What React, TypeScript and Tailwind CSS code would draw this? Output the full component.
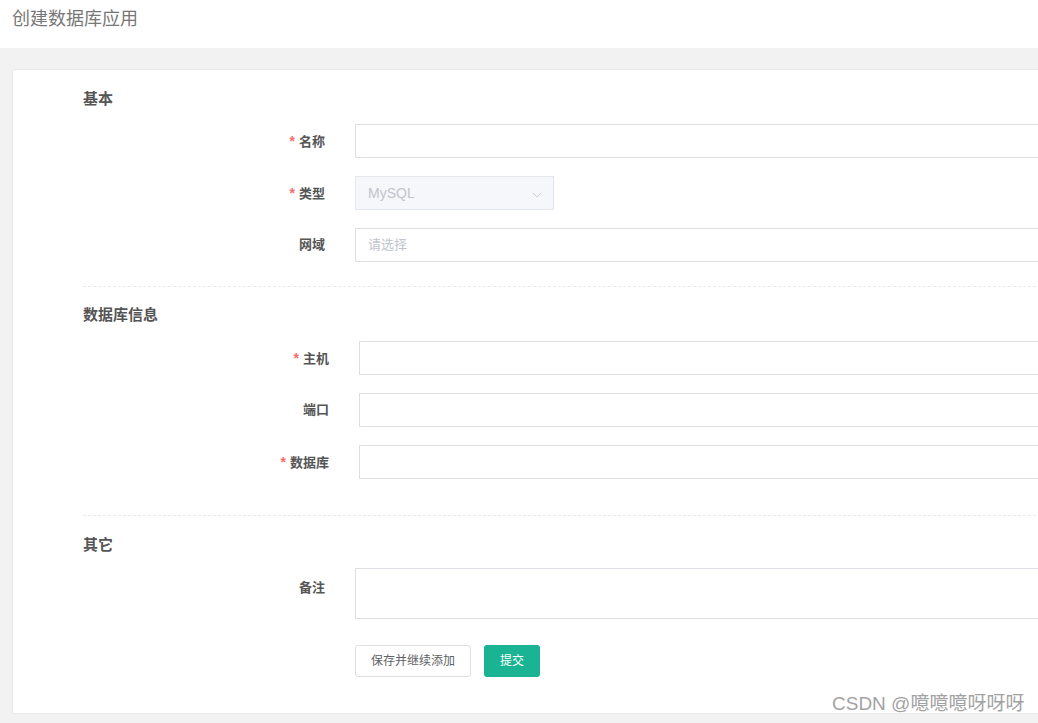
import { ChevronDown } from "lucide-react"

const font = "font-['Liberation_Sans','Noto_Sans_CJK_SC',sans-serif]"

function SectionTitle({ text, className }: { text: string; className?: string }) {
  return <div className={`h-5 leading-5 text-[15px] font-bold text-[#555] ${className ?? ""}`}>{text}</div>
}

function Label({ text, required, width, className }: { text: string; required?: boolean; width: string; className?: string }) {
  return (
    <div className={`${width} shrink-0 h-[34px] leading-[34px] text-right pr-[30px] text-[13px] font-bold text-[#555] ${className ?? ""}`}>
      {required && <span className="text-[#f56c6c] text-[14px] mr-1">*</span>}
      {text}
    </div>
  )
}

function Row({ label, required, width, children, className, labelClass }: { label: string; required?: boolean; width: string; children: React.ReactNode; className?: string; labelClass?: string }) {
  return (
    <div className={`flex items-start ${className ?? ""}`}>
      <Label text={label} required={required} width={width} className={labelClass} />
      {children}
    </div>
  )
}

function TextInput({ placeholder }: { placeholder?: string }) {
  return (
    <div className="flex-1 h-[34px] border border-[#dcdfe6] bg-white px-3 leading-[32px] text-[13px] text-[#c0c4cc]">
      {placeholder}
    </div>
  )
}

export default function App() {
  return (
    <div className={`w-[1038px] h-[723px] overflow-hidden bg-[#f2f2f2] relative ${font}`}>
      {/* page header */}
      <div className="h-12 bg-white pl-3 pt-[7px]">
        <div className="text-[18px] leading-6 text-[#777]">创建数据库应用</div>
      </div>

      <div className="pl-3 pt-[21px]">
        <div className="w-[1100px] bg-white border border-[#e7eaec] rounded-[2px] pl-[70px] pt-[19px] pb-[36px]">
          {/* 基本 */}
          <SectionTitle text="基本" />
          <div className="mt-[15px] flex flex-col gap-[18px]">
            <Row label="名称" required width="w-[272px]">
              <TextInput />
            </Row>
            <Row label="类型" required width="w-[272px]">
              <div className="w-[199px] h-[34px] border border-[#e4e7ed] bg-[#f5f7fa] px-3 flex items-center justify-between text-[14px] text-[#c0c4cc]">
                <span>MySQL</span>
                <ChevronDown className="w-4 h-4 mt-1 -mr-1" strokeWidth={1.25} />
              </div>
            </Row>
            <Row label="网域" width="w-[272px]">
              <TextInput placeholder="请选择" />
            </Row>
          </div>

          <div className="mt-6 border-t border-dashed border-[#e7eaec]" />

          {/* 数据库信息 */}
          <SectionTitle text="数据库信息" className="mt-[18px]" />
          <div className="mt-4 flex flex-col gap-[18px]">
            <Row label="主机" required width="w-[276px]">
              <TextInput />
            </Row>
            <Row label="端口" width="w-[276px]">
              <TextInput />
            </Row>
            <Row label="数据库" required width="w-[276px]">
              <TextInput />
            </Row>
          </div>

          <div className="mt-9 border-t border-dashed border-[#e7eaec]" />

          {/* 其它 */}
          <SectionTitle text="其它" className="mt-[19px]" />
          <Row label="备注" width="w-[272px]" className="mt-[13px]" labelClass="pt-[3px]">
            <div className="flex-1 h-[51px] border border-[#dcdfe6] bg-white" />
          </Row>

          <div className="mt-[26px] ml-[272px] flex gap-[13px]">
            <button className="h-8 w-[116px] border border-[#dcdfe6] rounded-[3px] bg-white text-[12px] text-[#606266]">
              保存并继续添加
            </button>
            <button className="h-8 w-14 rounded-[3px] bg-[#1ab394] text-[12px] text-white">提交</button>
          </div>
        </div>
      </div>

      {/* watermark */}
      <div className="absolute left-[832px] top-[692px] text-[19px] leading-6 text-[#999] opacity-90 whitespace-nowrap">
        CSDN @噫噫噫呀呀呀
      </div>
    </div>
  )
}
